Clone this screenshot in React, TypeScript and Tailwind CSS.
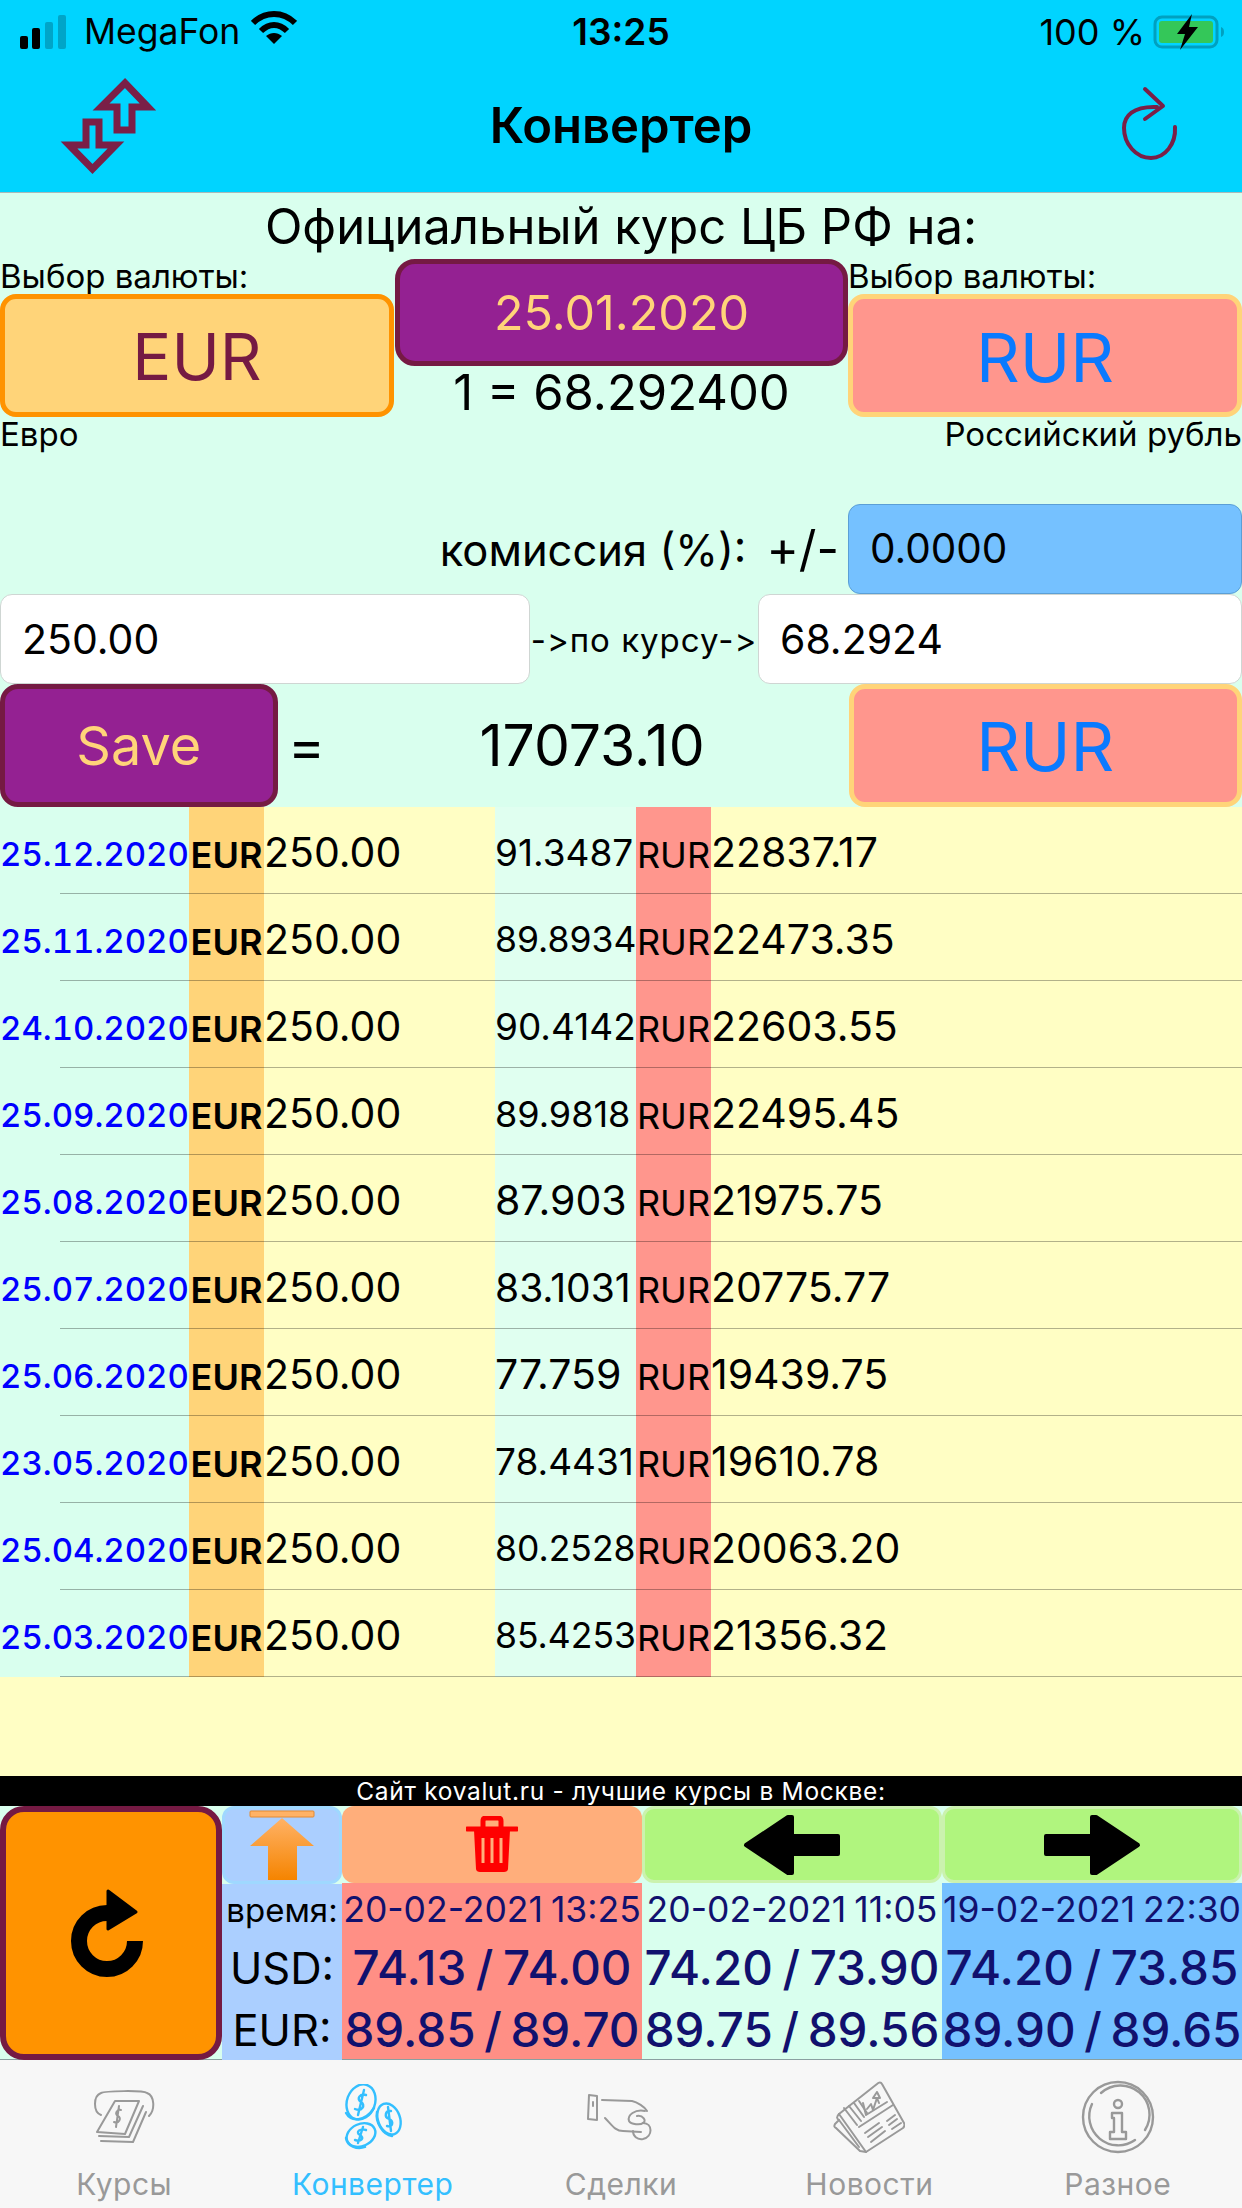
const rows = [
  { date: "25.12.2020", rate: "91.3487", total: "22837.17", rateSize: "text-[37px]" },
  { date: "25.11.2020", rate: "89.8934", total: "22473.35", rateSize: "text-[35.5px]" },
  { date: "24.10.2020", rate: "90.4142", total: "22603.55", rateSize: "text-[37px]" },
  { date: "25.09.2020", rate: "89.9818", total: "22495.45", rateSize: "text-[36px]" },
  { date: "25.08.2020", rate: "87.903", total: "21975.75", rateSize: "text-[41px]" },
  { date: "25.07.2020", rate: "83.1031", total: "20775.77", rateSize: "text-[39px]" },
  { date: "25.06.2020", rate: "77.759", total: "19439.75", rateSize: "text-[41px]" },
  { date: "23.05.2020", rate: "78.4431", total: "19610.78", rateSize: "text-[37px]" },
  { date: "25.04.2020", rate: "80.2528", total: "20063.20", rateSize: "text-[35.5px]" },
  { date: "25.03.2020", rate: "85.4253", total: "21356.32", rateSize: "text-[35.5px]" },
];

const quotes = [
  { time: "20-02-2021 13:25", usd: "74.13 / 74.00", eur: "89.85 / 89.70", bg: "bg-[#ff8f85]" },
  { time: "20-02-2021 11:05", usd: "74.20 / 73.90", eur: "89.75 / 89.56", bg: "bg-[#d9ffee]" },
  { time: "19-02-2021 22:30", usd: "74.20 / 73.85", eur: "89.90 / 89.65", bg: "bg-[#75c1ff]" },
];

const StatusBar = () => (
  <div className="h-[60px] flex items-center relative text-black">
    <svg width="56" height="36" viewBox="0 0 56 36" className="ml-[20px] mt-[4px]">
      <rect x="0" y="22" width="8" height="13" rx="2" fill="#000" />
      <rect x="12" y="14" width="8" height="21" rx="2" fill="#000" />
      <rect x="25" y="8" width="8" height="27" rx="2" fill="#00a5c8" />
      <rect x="38" y="1" width="8" height="34" rx="2" fill="#00a5c8" />
    </svg>
    <span className="ml-[8px] text-[35.5px] pt-[4px]">MegaFon</span>
    <svg width="46" height="34" viewBox="0 0 46 34" className="ml-[11px] -mt-[4px]">
      <path d="M2 12 C14 0 32 0 44 12" fill="none" stroke="#000" strokeWidth="6" />
      <path d="M10 20 C18 12 28 12 36 20" fill="none" stroke="#000" strokeWidth="6" />
      <path d="M23 33 L15 25 C20 21 26 21 31 25 Z" fill="#000" />
    </svg>
    <span className="absolute left-0 right-0 text-center text-[37px] font-semibold pt-[4px]">13:25</span>
    <span className="ml-auto text-[36px] pt-[4px]">100 %</span>
    <svg width="74" height="36" viewBox="0 0 74 36" className="ml-[8px] mr-[15px] mt-[4px]">
      <rect x="2" y="3" width="62" height="30" rx="7" fill="none" stroke="#00a0c0" strokeWidth="3" />
      <rect x="6" y="7" width="54" height="22" rx="3" fill="#34c759" />
      <path d="M68 13 C72 14 72 22 68 23 Z" fill="#00a0c0" />
      <path d="M39 0 L24 20 L32 20 L27 36 L45 13 L36 13 Z" fill="#000" />
    </svg>
  </div>
);

const Header = () => (
  <div className="bg-[#00d4ff] h-[193px] border-b border-[#a9b9b9]">
    <StatusBar />
    <div className="h-[132px] relative flex items-center justify-between">
      <svg width="150" height="130" viewBox="0 0 150 130" className="ml-[30px]">
        <path d="M95 22 L118 46 L102 46 L102 69 L87 69 L87 46 L71 46 Z" fill="none" stroke="#7a1f47" strokeWidth="7" />
        <path d="M62.5 108 L39 84 L56 84 L56 61 L69 61 L69 84 L86 84 Z" fill="none" stroke="#7a1f47" strokeWidth="7" />
      </svg>
      <span className="absolute left-0 right-0 text-center text-[49px] font-semibold text-black -mt-[1px]">Конвертер</span>
      <svg width="70" height="80" viewBox="0 0 70 80" className="mr-[58px]">
        <path d="M61 41 C62 58 51 72 37 72 C22 72 10 58 10 42 C10 30 19 20 43 21" fill="none" stroke="#7a1f47" strokeWidth="4" strokeLinecap="round" />
        <path d="M31 3 L49 20 L31 33" fill="none" stroke="#7a1f47" strokeWidth="4" strokeLinecap="round" strokeLinejoin="round" />
      </svg>
    </div>
  </div>
);

const Converter = () => (
  <div className="bg-[#d9ffee] text-black">
    <div className="h-[66px] flex items-center justify-center text-[49px] pt-[2px]">Официальный курс ЦБ РФ на:</div>
    <div className="h-[245px] flex">
      <div className="w-[394px] flex flex-col">
        <div className="h-[35px] flex items-center text-[33px]">Выбор валюты:</div>
        <div className="h-[123px] bg-[#ffd479] border-[5px] border-[#ff9300] rounded-[16px] flex items-center justify-center pt-[2px] text-[65px] text-[#751a43]">EUR</div>
        <div className="h-[36px] flex items-center text-[33px]">Евро</div>
      </div>
      <div className="flex-1 flex flex-col pl-[1px]">
        <div className="h-[107px] bg-[#942192] border-[5px] border-[#751a43] rounded-[20px] flex items-center justify-center pt-[1px] text-[48.5px] text-[#ffd479]">25.01.2020</div>
        <div className="h-[54px] flex items-center justify-center text-[49px]">1 = 68.292400</div>
      </div>
      <div className="w-[394px] flex flex-col">
        <div className="h-[35px] flex items-center text-[33px]">Выбор валюты:</div>
        <div className="h-[123px] bg-[#ff968d] border-[5px] border-[#ffd479] rounded-[16px] flex items-center justify-center pt-[3px] text-[68px] text-[#0a7aff]">RUR</div>
        <div className="h-[36px] flex items-center justify-end text-[33px] whitespace-nowrap">Российский рубль</div>
      </div>
    </div>
    <div className="h-[90px] flex items-center justify-end">
      <span className="text-[43.5px] pt-[3px]">комиссия (%):</span>
      <span className="text-[49px] ml-[20px] mr-[9px]">+/-</span>
      <div className="w-[394px] h-[90px] bg-[#75c1ff] border border-[#5b9fd6] rounded-[12px] flex items-center pl-[21px] pt-[1px] text-[40.5px]">0.0000</div>
    </div>
    <div className="h-[90px] flex items-center">
      <div className="w-[530px] h-[90px] bg-white border border-[#cfd6d3] rounded-[12px] flex items-center pl-[21px] pt-[1px] text-[41px]">250.00</div>
      <span className="flex-1 text-center text-[33px] tracking-[1px] whitespace-nowrap pt-[3px] [font-feature-settings:'calt'_0]">-&gt;по курсу-&gt;</span>
      <div className="w-[484px] h-[90px] bg-white border border-[#cfd6d3] rounded-[12px] flex items-center pl-[21px] pt-[1px] text-[41px]">68.2924</div>
    </div>
    <div className="h-[123px] flex items-center">
      <div className="w-[278px] h-[123px] bg-[#942192] border-[5px] border-[#751a43] rounded-[18px] flex items-center justify-center text-[54px] text-[#ffd479]">Save</div>
      <span className="w-[58px] text-center text-[56px]">=</span>
      <span className="w-[514px] text-center text-[57px]">17073.10</span>
      <div className="ml-auto w-[394px] h-[123px] bg-[#ff968d] border-[5px] border-[#ffd479] rounded-[16px] flex items-center justify-center text-[68px] text-[#0a7aff]">RUR</div>
    </div>
  </div>
);

const History = () => (
  <div className="bg-[#fffec4]">
    {rows.map((r) => (
      <div key={r.date} className="h-[87px] flex relative text-black">
        <div className="w-[189px] bg-[#d9ffee] flex items-center pt-[8px] text-[33px] font-medium tabular-nums text-[#0000ff]">{r.date}</div>
        <div className="w-[75px] bg-[#ffd479] flex items-center justify-center pt-[8px] text-[36px] font-semibold whitespace-nowrap">EUR</div>
        <div className="w-[231px] flex items-center pt-[5px] text-[41px]">250.00</div>
        <div className={`w-[141px] bg-[#e0fff0] flex items-center pt-[5px] whitespace-nowrap ${r.rateSize}`}>{r.rate}</div>
        <div className="w-[75px] bg-[#ff968d] flex items-center justify-center pt-[8px] text-[36px] whitespace-nowrap">RUR</div>
        <div className="flex-1 flex items-center pt-[5px] text-[41px]">{r.total}</div>
        <span className="absolute left-[60px] right-0 bottom-0 h-px bg-black/30" />
      </div>
    ))}
    <div className="h-[99px]" />
  </div>
);

const Quotes = () => (
  <div>
    <div className="h-[30px] bg-black text-white text-[24.5px] tracking-[0.7px] flex items-center justify-center">Сайт kovalut.ru - лучшие курсы в Москве:</div>
    <div className="h-[254px] flex bg-[#d9ffee] border-b border-[#8aa0a0]">
      <div className="w-[222px] h-[254px] bg-[#ff9300] border-[6px] border-[#751a43] rounded-[24px] flex items-center justify-center">
        <svg width="90" height="96" viewBox="0 0 90 96">
          <path d="M69 56 A28 28 0 1 1 41 28" fill="none" stroke="#000" strokeWidth="16" />
          <path d="M42 6 L70 27 L42 44 Z" fill="#000" stroke="#000" strokeWidth="3" strokeLinejoin="round" />
        </svg>
      </div>
      <div className="w-[120px] flex flex-col text-black">
        <div className="h-[78px] bg-[#abcfff] border-[3px] border-[#9fd8ff] rounded-[12px] flex items-center justify-center">
          <svg width="70" height="72" viewBox="0 0 70 72">
            <defs>
              <linearGradient id="orangeArrow" x1="0" y1="0" x2="0" y2="1">
                <stop offset="0" stopColor="#ffb266" />
                <stop offset="1" stopColor="#f58400" />
              </linearGradient>
            </defs>
            <rect x="3" y="2" width="64" height="6" rx="1" fill="#ffb266" stroke="#e58a30" />
            <path d="M35 9 L67 37 L50 37 L50 71 L21 71 L21 37 L3 37 Z" fill="url(#orangeArrow)" />
          </svg>
        </div>
        <div className="flex-1 bg-[#abcfff] flex flex-col">
          <div className="h-[52px] flex items-center justify-center text-[33px] pt-[1px]">время:</div>
          <div className="h-[62px] flex items-center justify-center text-[43.5px] pt-[3px]">USD:</div>
          <div className="h-[62px] flex items-center justify-center text-[43.5px] pt-[3px]">EUR:</div>
        </div>
      </div>
      {quotes.map((q, i) => (
        <div key={q.time} className="w-[300px] flex flex-col text-[#11116e]">
          {i === 0 ? (
            <div className="h-[78px] bg-[#ffae7b] rounded-[12px] flex items-center justify-center">
              <svg width="52" height="58" viewBox="0 0 52 58">
                <path d="M1 13 H51" stroke="#ff0000" strokeWidth="5" strokeLinecap="round" />
                <path d="M17 12 V5 C17 3 18 2 20 2 H32 C34 2 35 3 35 5 V12" fill="none" stroke="#ff0000" strokeWidth="5" />
                <path d="M8 14 L10 53 C10 55 12 56 14 56 H38 C40 56 42 55 42 53 L44 14 Z" fill="#ff0000" />
                <path d="M17 22 V47 M26 22 V47 M35 22 V47" stroke="#ffae7b" strokeWidth="3" />
              </svg>
            </div>
          ) : (
            <div className="h-[78px] bg-[#b0f57e] border-[3px] border-[#cbf2ae] rounded-[12px] flex items-center justify-center">
              <svg width="98" height="62" viewBox="0 0 98 62" className={i === 2 ? "-scale-x-100" : ""}>
                <path d="M3 31 L45 3 L49 3 L49 22 L95 22 L95 40 L49 40 L49 59 L45 59 Z" fill="#000" stroke="#000" strokeWidth="4" strokeLinejoin="round" />
              </svg>
            </div>
          )}
          <div className={`flex-1 flex flex-col ${q.bg}`}>
            <div className="h-[52px] flex items-center justify-center text-[35.5px] pt-[1px] [word-spacing:-2px] whitespace-nowrap">{q.time}</div>
            <div className="h-[62px] flex items-center justify-center text-[47.5px] pt-[3px] font-medium [word-spacing:-3px] whitespace-nowrap">{q.usd}</div>
            <div className="h-[62px] flex items-center justify-center text-[47.5px] pt-[3px] font-medium [word-spacing:-4px] whitespace-nowrap">{q.eur}</div>
          </div>
        </div>
      ))}
    </div>
  </div>
);

const KursyIcon = ({ c }: { c: string }) => (
  <svg width="62" height="54" viewBox="0 0 62 54" fill="none" stroke={c} strokeWidth="2" strokeLinecap="round" strokeLinejoin="round">
    <path d="M8 25 C0 22 0 6 8 3 C12 1 50 0 54 3 C62 6 62 20 56 26" />
    <path d="M22 11 L46 11 L32 44 L4 42 Z" />
    <path d="M28 20 C24 19 21 24 25 26 C29 28 26 34 21 32 M26 16 L23 37" />
    <path d="M50 16 L36 47 L6 46 M53 22 L40 52 L8 51" />
  </svg>
);

const CoinsIcon = ({ c }: { c: string }) => (
  <svg width="60" height="66" viewBox="0 0 60 66" fill="none" stroke={c} strokeWidth="2.4" strokeLinecap="round" strokeLinejoin="round">
    <ellipse cx="18" cy="18" rx="14" ry="18" transform="rotate(20 18 18)" />
    <path d="M3 29 C8 38 22 38 31 24" />
    <path d="M23 11 C17 9 13 15 18 18 C23 21 19 28 12 25 M21 6 L15 31" />
    <ellipse cx="46" cy="35" rx="11" ry="16" transform="rotate(-20 46 35)" />
    <path d="M34 28 C32 38 40 51 49 52" />
    <path d="M48 27 C42 26 41 33 46 35 C51 37 50 44 44 42 M45 23 L48 47" />
    <ellipse cx="18" cy="51" rx="15" ry="11" transform="rotate(-25 18 51)" />
    <path d="M3 54 C4 62 14 66 22 63" />
    <path d="M23 46 C17 44 12 48 17 51 C22 54 18 58 12 56 M20 43 L15 59" />
  </svg>
);

const HandIcon = ({ c }: { c: string }) => (
  <svg width="68" height="48" viewBox="0 0 68 48" fill="none" stroke={c} strokeWidth="2" strokeLinecap="round" strokeLinejoin="round">
    <path d="M2 2 L10 3 L10 27 L1 26 Z" />
    <path d="M6 9 V13" />
    <path d="M15 7 L45 8 C50 9 58 14 60 18" />
    <path d="M18 25 C25 32 28 38 36 38 L54 39" />
    <path d="M58 18 C48 16 40 22 42 28 C44 32 54 32 56 30 C60 28 56 22 50 23" />
    <path d="M56 30 C66 30 66 44 56 46 C50 47 46 43 46 38" />
  </svg>
);

const NewsIcon = ({ c }: { c: string }) => (
  <svg width="72" height="72" viewBox="0 0 72 72" fill="none" stroke={c} strokeWidth="2" strokeLinecap="round" strokeLinejoin="round">
    <path d="M6 33 L44 3 C46 1 48 1 49 3 L71 42 C72 44 71 46 70 47 L33 71 L6 33 Z" />
    <path d="M6 33 C3 36 4 38 6 39 L2 43 C1 45 1 46 3 47 L27 70 L33 71" />
    <path d="M6 39 L26 66" />
    <path d="M11 27 L24 44 M16 25 L28 40 M21 22 L31 36 M26 20 L34 32" strokeWidth="2" />
    <path d="M33 34 L30 22 M33 34 L54 21" />
    <path d="M34 28 L38 23 L40 29 L44 17 L46 22 M44 11 L40 17 L47 17 Z" />
    <path d="M26 46 L60 24" />
    <path d="M32 52 L46 42 M35 56 L49 46 M38 61 L52 50 M54 40 L62 34 M56 44 L64 38 M59 48 L68 42" />
  </svg>
);

const InfoIcon = ({ c }: { c: string }) => (
  <svg width="74" height="74" viewBox="0 0 74 74" fill="none" stroke={c} strokeWidth="2.4" strokeLinecap="round" strokeLinejoin="round">
    <circle cx="37" cy="37" r="35" />
    <path d="M20 13 A29 29 0 0 1 64 50 M54 60 A29 29 0 0 1 11 24" />
    <circle cx="37" cy="24" r="4" />
    <path d="M31 33 H41 V52 H45 V59 H29 V52 H33 V38 H31 Z" />
  </svg>
);

const Tab = ({ label, active, children }: { label: string; active?: boolean; children: React.ReactNode }) => (
  <div className="flex flex-col items-center">
    <div className="h-[107px] flex items-center justify-center pt-[6px]">{children}</div>
    <span className={`text-[30px] tracking-[0.5px] leading-[34px] ${active ? "text-[#33bfff]" : "text-[#999999]"}`}>{label}</span>
  </div>
);

const TabBar = () => (
  <div className="h-[148px] bg-[#f7f7f7] grid grid-cols-5">
    <Tab label="Курсы"><KursyIcon c="#999999" /></Tab>
    <Tab label="Конвертер" active><CoinsIcon c="#33bfff" /></Tab>
    <Tab label="Сделки"><HandIcon c="#999999" /></Tab>
    <Tab label="Новости"><NewsIcon c="#999999" /></Tab>
    <Tab label="Разное"><InfoIcon c="#999999" /></Tab>
  </div>
);

const App = () => {
  return (
    <div className="w-[1242px] h-[2208px] overflow-hidden font-[Inter,sans-serif]">
      <Header />
      <Converter />
      <History />
      <Quotes />
      <TabBar />
    </div>
  );
};

export default App;
